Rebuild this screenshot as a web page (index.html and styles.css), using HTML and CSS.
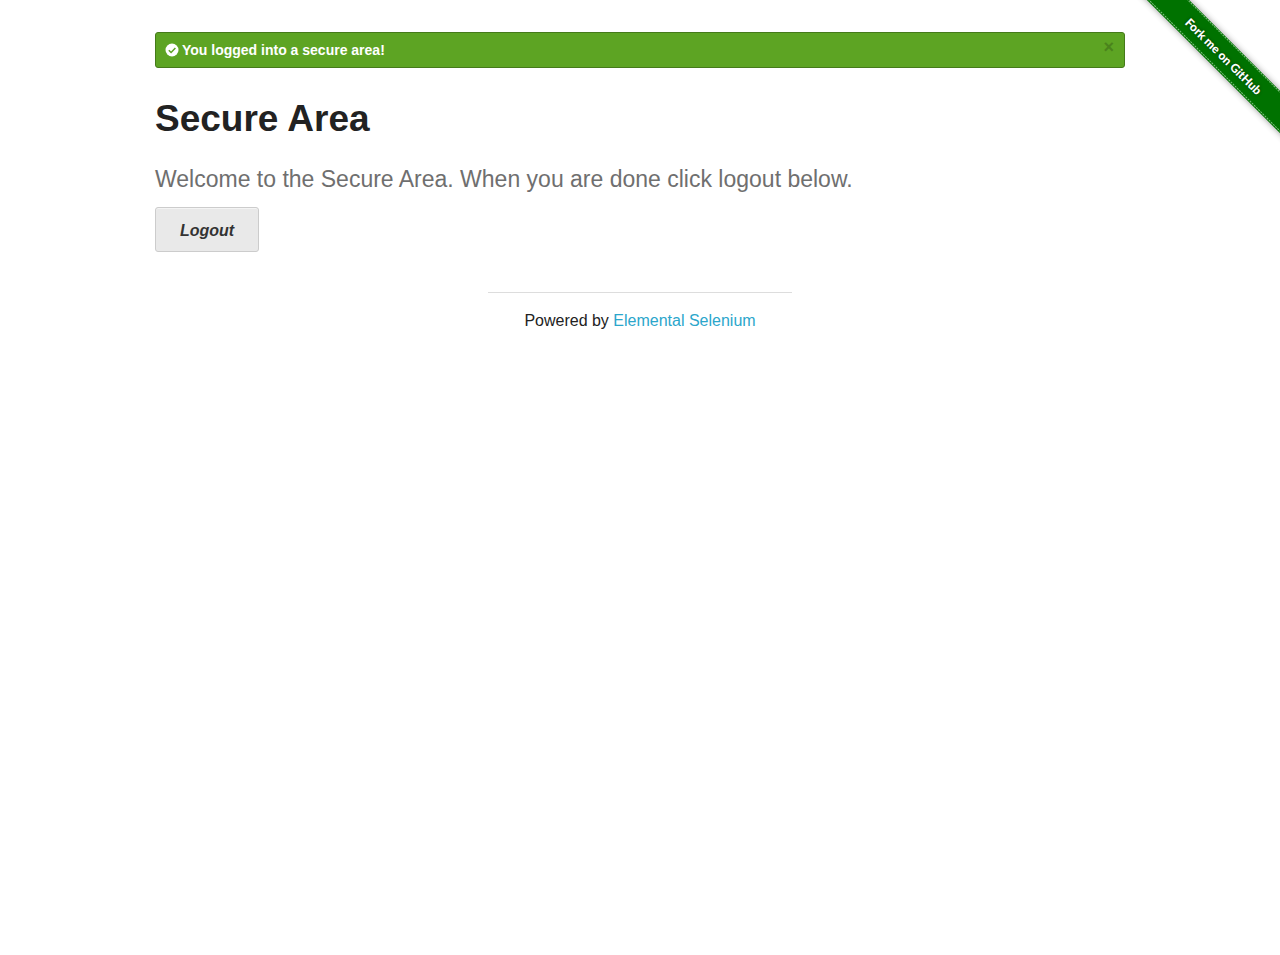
FILE: index.html
```html
<!DOCTYPE html>
<html lang="en">
<head>
<meta charset="utf-8">
<meta name="viewport" content="width=device-width, initial-scale=1">
<title>The Internet</title>
<link rel="stylesheet" href="styles.css">
</head>
<body>
<a class="ribbon" href="#" aria-label="Fork me on GitHub">
  <svg class="ribbon-art" viewBox="0 0 149 149">
    <g transform="translate(93 56) rotate(45)">
      <rect class="ribbon-band" x="-130" y="-15" width="260" height="30"/>
      <path class="ribbon-stitch" d="M-130-14H130M-130 13.5H130"/>
      <text class="ribbon-text" x="0" y="5" text-anchor="middle">Fork me on GitHub</text>
    </g>
  </svg>
</a>
<main class="page">
  <div class="alert" role="status">
    <svg class="alert-icon" viewBox="0 0 14 14" aria-hidden="true">
      <circle cx="7" cy="7" r="6.5" fill="#fff"/>
      <path d="M3.8 7.2l2.3 2.3 4.3-4.4" fill="none" stroke="#5da423" stroke-width="1.5"/>
    </svg>
    <span class="alert-text">You logged into a secure area!</span>
    <button class="alert-close" type="button" aria-label="Close">×</button>
  </div>
  <h2 class="title">Secure Area</h2>
  <h4 class="subheader">Welcome to the Secure Area. When you are done click logout below.</h4>
  <button class="logout" type="button">Logout</button>
</main>
<footer class="footer">
  <hr class="rule">
  <div class="powered">Powered by <a class="link" href="#">Elemental Selenium</a></div>
</footer>
</body>
</html>
```
FILE: styles.css
```css
* { box-sizing: border-box; }
body {
  margin: 0;
  background: #fff;
  color: #222;
  font: 16px/24px "Liberation Sans", Arial, sans-serif;
}
.ribbon {
  position: absolute;
  top: 0;
  right: 0;
  width: 149px;
  height: 149px;
  overflow: hidden;
}
.ribbon-art { display: block; width: 100%; }
.ribbon-band { fill: #007200; filter: drop-shadow(0 0 3px rgba(0, 0, 0, .4)); }
.ribbon-stitch { fill: none; stroke: #7fbf7f; stroke-width: 1; stroke-dasharray: 2 1; }
.ribbon-text {
  fill: #fff;
  font: 900 12px Lato, "Open Sans", sans-serif;
  text-shadow: 0 0 3px #003800;
}
.page { max-width: 1000px; margin: 0 auto; padding: 32px 15px 0; }
.alert {
  display: flex;
  align-items: center;
  gap: 3px;
  min-height: 36px;
  padding: 0 10px 0 9px;
  border: 1px solid #457a1a;
  border-radius: 3px;
  background: #5da423;
  color: #fff;
  font-size: 14px;
  font-weight: bold;
}
.alert-icon { width: 14px; height: 14px; }
.alert-text { flex: 1; }
.alert-close {
  padding: 0 0 6px;
  border: 0;
  background: none;
  color: #4a831c;
  font: bold 18px/18px "Liberation Sans", Arial, sans-serif;
}
.title { margin: 25px 0 18px; font-size: 37px; line-height: 52px; }
.subheader {
  margin: 0 0 12px;
  color: #6f6f6f;
  font-size: 23px;
  font-weight: normal;
  line-height: 32px;
}
.logout {
  display: block;
  min-height: 45px;
  padding: 2px 24px 0;
  border: 1px solid #ccc;
  border-radius: 3px;
  background: #e9e9e9;
  box-shadow: inset 0 1px rgba(255, 255, 255, .5);
  color: #333;
  font: italic bold 16px/24px "Liberation Sans", Arial, sans-serif;
}
.footer { max-width: 304px; margin: 40px auto 0; text-align: center; }
.rule { height: 1px; margin: 0 0 16px; border: 0; background: #ddd; }
.link { color: #2ba6cb; text-decoration: none; }
```
